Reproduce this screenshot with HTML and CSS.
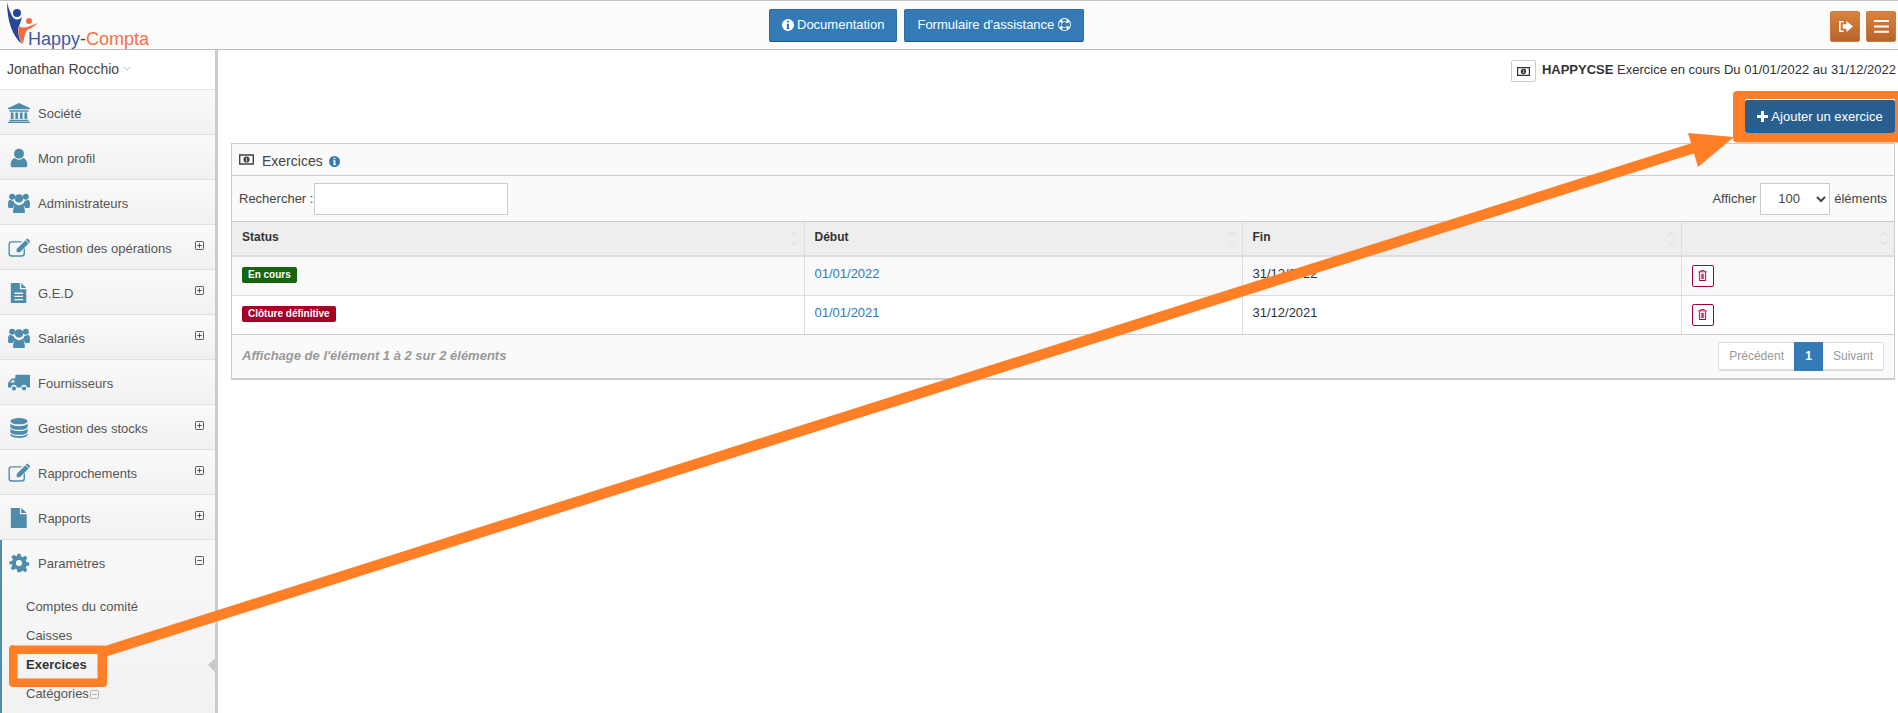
FILE: index.html
```html
<!DOCTYPE html>
<html lang="fr">
<head>
<meta charset="utf-8">
<title>Happy-Compta - Exercices</title>
<link rel="stylesheet" href="styles.css">
</head>
<body>
<svg class="defs" width="0" height="0" aria-hidden="true">
  <symbol id="i-bank" viewBox="0 0 24 22"><path d="M12 0 24 5.500V7H0V5.500ZM1.500 8h21v1.500h-21zM3 10.500h3v7H3zM8 10.500h3v7H8zM13 10.500h3v7h-3zM18 10.500h3v7h-3zM1.500 18.500h21V20h-21zM0 20.500h24V22H0z"/></symbol>
  <symbol id="i-user" viewBox="0 0 24 24"><circle cx="12" cy="7" r="6"/><path d="M4 23c-1.500 0-2-1-2-2.500C2 16 4 12.500 7 12c1.300 1.300 3 2.200 5 2.200s3.700-.9 5-2.200c3 .5 5 4 5 8.500 0 1.500-.5 2.500-2 2.500z"/></symbol>
  <symbol id="i-users" viewBox="0 0 24 22"><circle cx="4.500" cy="4" r="3.300"/><circle cx="19.500" cy="4" r="3.300"/><circle cx="12" cy="6" r="4.500"/><path d="M0 15V11c0-2 1-3.500 2.500-3.500 1 .8 2 1.200 3.500 1.200.5 2 1.500 3 3 3.800C7 13.500 5.500 15 5.300 16.500 2 16.500 0 16.500 0 15zM24 15v-4c0-2-1-3.500-2.500-3.500-1 .8-2 1.200-3.500 1.200-.5 2-1.500 3-3 3.800 2 1 3.500 2.500 3.700 4 3.300 0 5.300 0 5.300-1.500zM6.500 22c-.8 0-1-.8-1-1.500 0-4 1.500-7.500 3.500-8 1 .8 2 1.300 3 1.300s2-.5 3-1.300c2 .5 3.500 4 3.500 8 0 .7-.2 1.500-1 1.500z"/></symbol>
  <symbol id="i-edit" viewBox="0 0 24 20"><path d="M4 2.500h11.500l-1.500 1.500H4A2 2 0 0 0 2 6v10a2 2 0 0 0 2 2h11a2 2 0 0 0 2-2v-4.500l1.500-1.500v6a3.500 3.500 0 0 1-3.500 3.500H4A3.500 3.500 0 0 1 .5 16V6A3.500 3.500 0 0 1 4 2.500z"/><path d="M19 1.500 22.500 5 13 14.500H9.500V11zM20 .5c.8-.7 1.600-.7 2.300 0l1.200 1.200c.7.700.7 1.500 0 2.300l-.5.500L19.500 1z"/></symbol>
  <symbol id="i-file-text" viewBox="0 0 18 22"><path d="M1 0h9v7h7v14a1 1 0 0 1-1 1H1a1 1 0 0 1-1-1V1a1 1 0 0 1 1-1zM11.500 0 17 5.500h-5.500zM4 10.500v1.500h9.500v-1.500zM4 14v1.500h9.500V14zM4 17.500V19h9.500v-1.500z" fill-rule="evenodd"/></symbol>
  <symbol id="i-file" viewBox="0 0 18 22"><path d="M1 0h9v7h7.500v14a1 1 0 0 1-1 1H1a1 1 0 0 1-1-1V1a1 1 0 0 1 1-1zM11.500 0 17.500 5.500h-6z"/></symbol>
  <symbol id="i-truck" viewBox="0 0 24 18"><path d="M9 0h14a1 1 0 0 1 1 1v12a1 1 0 0 1-1 1h-2.500a3 3 0 0 0-6 0H9.500a3 3 0 0 0-6 0H1a1 1 0 0 1-1-1V9l4-5h4V1a1 1 0 0 1 1-1zM2.500 8.500H7V6H4.500z" fill-rule="evenodd"/><circle cx="6.500" cy="15" r="2.300"/><circle cx="17.500" cy="15" r="2.300"/></symbol>
  <symbol id="i-db" viewBox="0 0 20 22"><ellipse cx="10" cy="3.500" rx="9.500" ry="3.500"/><path d="M.5 6c1.500 2 5 2.800 9.500 2.800S18 8 19.500 6v3.500c0 2-4 3.500-9.500 3.500S.5 11.500.5 9.500zM.5 11.500c1.500 2 5 2.800 9.500 2.800s8-.8 9.500-2.800V15c0 2-4 3.500-9.500 3.500S.5 17 .5 15zM.5 17c1.500 2 5 2.800 9.500 2.800s8-.8 9.500-2.800v1.500c0 2-4 3.500-9.500 3.500S.5 20.500.5 18.500z"/></symbol>
  <symbol id="i-cog" viewBox="-1 -1 26 26"><path fill-rule="evenodd" d="M10 0h4l.7 3.500 2.300 1 3-2 2.800 2.800-2 3 1 2.300 3.500.7v4l-3.500.7-1 2.300 2 3-2.800 2.800-3-2-2.300 1L14 24h-4l-.7-3.500-2.300-1-3 2-2.800-2.800 2-3-1-2.300L-.5 14v-4l3.500-.7 1-2.300-2-3L5.300 1.200l3 2 1-.2zM12 8a4 4 0 1 0 0 8 4 4 0 0 0 0-8z"/></symbol>
  <symbol id="i-plus-sq" viewBox="0 0 10 10"><path fill="none" stroke="currentColor" d="M1.500.5h7a1 1 0 0 1 1 1v7a1 1 0 0 1-1 1h-7a1 1 0 0 1-1-1v-7a1 1 0 0 1 1-1zM2.500 5h5M5 2.500v5"/></symbol>
  <symbol id="i-minus-sq" viewBox="0 0 10 10"><path fill="none" stroke="currentColor" d="M1.500.5h7a1 1 0 0 1 1 1v7a1 1 0 0 1-1 1h-7a1 1 0 0 1-1-1v-7a1 1 0 0 1 1-1zM2.500 5h5"/></symbol>
  <symbol id="i-money" viewBox="0 0 16 11"><path fill-rule="evenodd" d="M0 0h16v11H0zM1.500 1.500v8h13v-8zM8 2.200a3.300 3.300 0 1 1 0 6.600 3.300 3.300 0 0 1 0-6.600zM7.300 3.800v.7h.4v2.200h-.5v.6h1.700v-.6h-.5V3.800z"/></symbol>
  <symbol id="i-info" viewBox="0 0 12 12"><path fill-rule="evenodd" d="M6 0a6 6 0 1 1 0 12A6 6 0 0 1 6 0zM5 1.800v1.800h2V1.800zM4.500 4.700v1.100H5v3H4.500v1.100h3V8.800H7V4.700z"/></symbol>
  <symbol id="i-ring" viewBox="0 0 14 14"><path fill-rule="evenodd" d="M7 0a7 7 0 1 1 0 14A7 7 0 0 1 7 0zM7 4.200a2.800 2.800 0 1 0 0 5.600 2.800 2.800 0 0 0 0-5.600zM4.300 1.700l1 2.300a3.500 3.500 0 0 1 3.400 0l1-2.300a6 6 0 0 0-5.400 0zM4.300 12.300l1-2.300a3.500 3.500 0 0 0 3.400 0l1 2.300a6 6 0 0 1-5.400 0zM1.700 4.300l2.300 1a3.500 3.500 0 0 0 0 3.400l-2.300 1a6 6 0 0 1 0-5.400zM12.300 4.300l-2.300 1a3.500 3.500 0 0 0 0 3.400l2.300 1a6 6 0 0 0 0-5.400z"/></symbol>
  <symbol id="i-out" viewBox="0 0 16 14"><path d="M1 1h5v1.800H2.800v8.400H6V13H1z"/><path d="M5 4.500h4V1l7 6-7 6V9.500H5z"/></symbol>
  <symbol id="i-bars" viewBox="0 0 16 14"><path d="M0 0h16v2.200H0zM0 5.800h16V8H0zM0 11.600h16v2.200H0z"/></symbol>
  <symbol id="i-plus" viewBox="0 0 11 11"><path d="M4 0h3v4h4v3H7v4H4V7H0V4h4z"/></symbol>
  <symbol id="i-trash" viewBox="0 0 10 12"><path d="M3.200 0h3.600l.8 1.500H10v1H9v8.500a1 1 0 0 1-1 1H2a1 1 0 0 1-1-1V2.500H0v-1h2.400zM2 2.500V11h6V2.500zM3.500 1.500h3L6.200.8H3.800zM3.200 4h.8v6h-.8zM4.600 4h.8v6h-.8zM6 4h.8v6H6z" fill-rule="evenodd"/></symbol>
  <symbol id="i-sort" viewBox="0 0 12 20"><path fill="none" stroke="currentColor" d="M1 7l5-5 5 5M1 13l5 5 5-5"/></symbol>
</svg>

<header class="topbar">
  <a class="logo">
    <svg class="logo-mark" viewBox="7 1 34 46" aria-hidden="true">
      <path fill="#24479a" d="M7 2C7 20 12 36 22 44 18 36 17 30 19 26 20 24 21 21 22 17 18 21 14 20 12 16 10 12 8 7 7 2z"/>
      <circle cx="17" cy="13" r="4" fill="#24479a"/>
      <path fill="#f4693f" d="M23 44C19 38 17 32 19 26 22 28 26 28 30 26L38 23C33 27 30 29 27 30 25 33 24 38 23 44z"/>
      <circle cx="29" cy="21" r="3" fill="#f4693f"/>
    </svg>
    <span class="logo-text"><span class="logo-a">Happy</span><span class="logo-d">-</span><span class="logo-b">Compta</span></span>
  </a>
  <div class="top-actions">
    <a class="btn btn-blue btn-doc"><svg class="ic12"><use href="#i-info"/></svg> Documentation</a>
    <a class="btn btn-blue">Formulaire d'assistance <svg class="ic14"><use href="#i-ring"/></svg></a>
  </div>
  <div class="top-right">
    <a class="btn-orange"><svg class="ic-o"><use href="#i-out"/></svg></a>
    <a class="btn-orange"><svg class="ic-o"><use href="#i-bars"/></svg></a>
  </div>
</header>

<div class="layout">
  <aside class="sidebar">
    <div class="user">Jonathan Rocchio<svg class="chev" viewBox="0 0 8 5"><path fill="none" stroke="currentColor" d="M.5.500 4 4 7.500.5"/></svg></div>
    <nav>
      <a class="item"><svg class="ico"><use href="#i-bank"/></svg><span>Société</span></a>
      <a class="item"><svg class="ico"><use href="#i-user"/></svg><span>Mon profil</span></a>
      <a class="item"><svg class="ico"><use href="#i-users"/></svg><span>Administrateurs</span></a>
      <a class="item"><svg class="ico"><use href="#i-edit"/></svg><span>Gestion des opérations</span><svg class="tog"><use href="#i-plus-sq"/></svg></a>
      <a class="item"><svg class="ico"><use href="#i-file-text"/></svg><span>G.E.D</span><svg class="tog"><use href="#i-plus-sq"/></svg></a>
      <a class="item"><svg class="ico"><use href="#i-users"/></svg><span>Salariés</span><svg class="tog"><use href="#i-plus-sq"/></svg></a>
      <a class="item"><svg class="ico"><use href="#i-truck"/></svg><span>Fournisseurs</span></a>
      <a class="item"><svg class="ico"><use href="#i-db"/></svg><span>Gestion des stocks</span><svg class="tog"><use href="#i-plus-sq"/></svg></a>
      <a class="item"><svg class="ico"><use href="#i-edit"/></svg><span>Rapprochements</span><svg class="tog"><use href="#i-plus-sq"/></svg></a>
      <a class="item"><svg class="ico"><use href="#i-file"/></svg><span>Rapports</span><svg class="tog"><use href="#i-plus-sq"/></svg></a>
      <div class="open">
        <a class="item item-open"><svg class="ico"><use href="#i-cog"/></svg><span>Paramètres</span><svg class="tog"><use href="#i-minus-sq"/></svg></a>
        <ul class="sub">
          <li>Comptes du comité</li>
          <li>Caisses</li>
          <li class="current">Exercices</li>
          <li>Catégories<svg class="tog-light"><use href="#i-minus-sq"/></svg></li>
        </ul>
      </div>
    </nav>
    <i class="caret"></i>
  </aside>

  <main class="main">
    <div class="context">
      <span class="ctx-box"><svg class="ic-m"><use href="#i-money"/></svg></span>
      <span><b>HAPPYCSE</b> Exercice en cours Du 01/01/2022 au 31/12/2022</span>
    </div>
    <div class="add-row"><a class="btn-add"><svg class="ic-p"><use href="#i-plus"/></svg> Ajouter un exercice</a></div>

    <section class="panel">
      <div class="panel-head"><svg class="ic-mh"><use href="#i-money"/></svg><span>Exercices</span><svg class="ic-i"><use href="#i-info"/></svg></div>
      <div class="filters">
        <label class="search">Rechercher :<input type="text"></label>
        <label class="length">Afficher <select><option>100</option></select> éléments</label>
      </div>
      <table>
        <colgroup><col class="c1"><col class="c2"><col class="c3"><col></colgroup>
        <thead>
          <tr>
            <th>Status<svg class="sort"><use href="#i-sort"/></svg></th>
            <th>Début<svg class="sort"><use href="#i-sort"/></svg></th>
            <th>Fin<svg class="sort"><use href="#i-sort"/></svg></th>
            <th><svg class="sort"><use href="#i-sort"/></svg></th>
          </tr>
        </thead>
        <tbody>
          <tr class="odd">
            <td><span class="badge green">En cours</span></td>
            <td><a class="link">01/01/2022</a></td>
            <td>31/12/2022</td>
            <td><a class="del"><svg class="ic-t"><use href="#i-trash"/></svg></a></td>
          </tr>
          <tr>
            <td><span class="badge red">Clôture définitive</span></td>
            <td><a class="link">01/01/2021</a></td>
            <td>31/12/2021</td>
            <td><a class="del"><svg class="ic-t"><use href="#i-trash"/></svg></a></td>
          </tr>
        </tbody>
      </table>
      <div class="panel-foot">
        <em>Affichage de l'élément 1 à 2 sur 2 éléments</em>
        <div class="pager"><a>Précédent</a><a class="on">1</a><a>Suivant</a></div>
      </div>
    </section>
  </main>
</div>

<svg class="annot" viewBox="0 0 1898 713" aria-hidden="true">
  <path fill="#ff7f27" fill-rule="evenodd" d="M1737 91h170v51.500h-170a4 4 0 0 1-4-4V95a4 4 0 0 1 4-4zM1745 99v34h150V99z"/>
  <path fill="#ff7f27" fill-rule="evenodd" d="M13 645.500h90a4 4 0 0 1 4 4V683a4 4 0 0 1-4 4H13a4 4 0 0 1-4-4v-33.500a4 4 0 0 1 4-4.500zM17.500 654v24.500h80V654z"/>
  <path stroke="#ff7f27" stroke-width="10.500" d="M100 653 1700 146"/>
  <path fill="#ff7f27" d="M1734 137 1688 133 1698 167z"/>
</svg>
</body>
</html>
```
FILE: styles.css
```css
* { box-sizing: border-box; }
html, body { margin: 0; height: 713px; overflow: hidden; }
body {
  position: relative;
  display: flex;
  flex-direction: column;
  background: #fff;
  color: #333;
  font: 13px/18px "Liberation Sans", Arial, sans-serif;
}
.defs { position: absolute; }
a { color: inherit; text-decoration: none; }
svg { fill: currentColor; }

/* top bar */
.topbar {
  flex: 0 0 50px;
  display: flex;
  align-items: flex-start;
  background: #fbfbf9;
  border-top: 1px solid #c4c4c4;
  border-bottom: 1px solid #bdbdbd;
}
.logo { position: relative; flex: 0 0 769px; height: 48px; display: block; }
.logo-mark { position: absolute; left: 7px; top: 0; width: 34px; height: 46px; }
.logo-text { position: absolute; left: 28px; top: 27px; font-size: 18px; line-height: 22px; white-space: nowrap; }
.logo-a { color: #3f5aa3; }
.logo-d { color: #444; }
.logo-b { color: #f4704a; }
.top-actions { display: flex; gap: 7px; margin-top: 8px; }
.btn {
  height: 33px;
  padding: 0 12px 2px;
  display: flex;
  align-items: center;
  gap: 4px;
  background: #337ab7;
  border: 1px solid #2e6da4;
  border-bottom-color: #245580;
  border-radius: 2px;
  color: #fff;
  white-space: nowrap;
}
.btn-doc { gap: 3px; }
.ic12 { width: 12px; height: 12px; }
.ic14 { width: 13px; height: 13px; }
.top-right { margin-left: auto; margin-top: 10px; display: flex; gap: 6px; padding-right: 2px; }
.btn-orange {
  width: 30px;
  height: 31px;
  display: flex;
  align-items: center;
  justify-content: center;
  color: #fff;
  background: linear-gradient(#d9823e, #b8632b);
  border: 1px solid #cf7a3c;
  border-radius: 2px;
}
.ic-o { width: 15px; height: 13px; }

/* layout */
.layout { flex: 1; display: flex; min-height: 0; }
.sidebar {
  position: relative;
  flex: 0 0 218px;
  border-right: 3px solid #ccc;
  overflow: hidden;
  color: #555;
}
.user {
  height: 40px;
  padding: 0 7px 2px;
  display: flex;
  align-items: center;
  font-size: 14px;
  color: #444;
  border-bottom: 1px solid #e2e2e2;
}
.chev { width: 8px; height: 5px; margin-left: 4px; color: #bbb; }
.item {
  position: relative;
  height: 45px;
  padding-top: 3px;
  display: flex;
  align-items: center;
  background: linear-gradient(#fafafa, #f1f1f1);
  border-bottom: 1px solid #e0e0e0;
}
.item span { flex: 1; }
.ico { flex: 0 0 22px; height: 20px; margin: 0 8px 1px; color: #4e8cab; }
.tog { width: 9px; height: 9px; margin-right: 11px; margin-bottom: 6px; color: #444; }
.open {
  background: linear-gradient(#f8f8f8, #f1f1f1);
  border-left: 2px solid #4e8cab;
  min-height: 200px;
}
.item-open { background: none; border-bottom: 0; margin-left: -2px; padding-top: 2px; }
.sub { list-style: none; margin: 0; padding: 7px 0 0 24px; }
.sub li { height: 29px; line-height: 29px; color: #555; }
.sub .current { font-weight: bold; color: #333; }
.tog-light { width: 9px; height: 9px; margin-left: 1px; color: #aaa; vertical-align: -1px; }
.caret {
  position: absolute;
  right: 0;
  top: 608px;
  border: 7px solid transparent;
  border-left-width: 0;
  border-right-color: #c9c9c9;
}

/* main */
.main { flex: 1; min-width: 0; padding: 0 3px 0 13px; }
.context {
  height: 40px;
  padding-top: 10px;
  display: flex;
  justify-content: flex-end;
  gap: 6px;
  align-items: flex-start;
  line-height: 19px;
  margin-right: -1px;
}
.ctx-box {
  width: 25px;
  height: 22px;
  display: flex;
  align-items: center;
  justify-content: center;
  border: 1px solid #ccc;
  border-radius: 2px;
  background: #fff;
}
.ic-m { width: 13px; height: 9px; }
.add-row { height: 53px; padding-top: 10px; display: flex; justify-content: flex-end; }
.btn-add {
  width: 150px;
  height: 33px;
  display: flex;
  align-items: center;
  justify-content: center;
  gap: 3px;
  background: #295f8e;
  color: #fff;
  border-radius: 2px;
}
.ic-p { width: 11px; height: 11px; }

/* panel */
.panel {
  background: #fafafa;
  border: 1px solid #ccc;
  border-bottom-width: 2px;
}
.panel-head {
  height: 32px;
  padding: 3px 7px 0;
  display: flex;
  align-items: center;
  font-size: 14px;
  color: #444;
  border-bottom: 1px solid #ccc;
}
.ic-mh { width: 15px; height: 11px; margin-right: 8px; margin-bottom: 3px; }
.ic-i { width: 11px; height: 11px; margin-left: 6px; color: #337ab7; }
.filters {
  height: 45px;
  padding: 6px 7px;
  display: flex;
  justify-content: space-between;
  align-items: center;
  color: #444;
}
.search { display: flex; align-items: center; }
.search input {
  width: 194px;
  height: 32px;
  margin: 0 0 0 1px;
  border: 1px solid #ccc;
  background: #fff;
}
.length { display: flex; align-items: center; gap: 4px; }
.length select {
  width: 70px;
  height: 32px;
  padding: 0 0 0 13px;
  border: 1px solid #ccc;
  background: #fff;
  font: 13px "Liberation Sans", Arial, sans-serif;
  color: #444;
}
table { width: 100%; border-collapse: collapse; table-layout: fixed; }
.c1 { width: 572px; }
.c2 { width: 438px; }
.c3 { width: 439px; }
th {
  position: relative;
  height: 34px;
  padding: 0 10px 2px;
  text-align: left;
  font-size: 12px;
  background: #eee;
  border-top: 1px solid #ccc;
  border-bottom: 2px solid #ddd;
  border-left: 1px solid #ddd;
  color: #333;
}
th:first-child, td:first-child { border-left: 0; }
.sort { position: absolute; right: 5px; top: 9px; width: 10px; height: 15px; color: #d4d4d4; }
td {
  height: 39px;
  padding: 8px 10px;
  vertical-align: top;
  background: #fff;
  border-left: 1px solid #ddd;
  border-bottom: 1px solid #ccc;
}
.odd td { background: #f9f9f9; border-bottom-color: #ddd; }
.link { color: #337ab7; }
.badge {
  display: inline-block;
  height: 16px;
  margin-top: 2px;
  padding: 0 6px;
  font-size: 10px;
  line-height: 15px;
  font-weight: bold;
  color: #fff;
  border-radius: 2px;
  vertical-align: top;
}
.green { background: #17650f; }
.red { background: #a60029; }
.del {
  width: 22px;
  height: 22px;
  display: flex;
  align-items: center;
  justify-content: center;
  border: 1px solid #a60030;
  border-radius: 2px;
  background: #fff;
  color: #a60030;
}
.ic-t { width: 9px; height: 11px; }
.panel-foot {
  height: 43px;
  padding: 7px 10px 0 10px;
  display: flex;
  justify-content: space-between;
  align-items: flex-start;
}
.panel-foot em { font-weight: bold; color: #999; line-height: 28px; }
.pager {
  display: flex;
  height: 29px;
  border: 1px solid #ddd;
  border-bottom-width: 2px;
  border-radius: 2px;
  background: #fff;
  color: #999;
  font-size: 12px;
  line-height: 26px;
}
.pager a { padding: 0 10px; }
.pager .on {
  width: 29px;
  padding: 0;
  text-align: center;
  background: #337ab7;
  color: #fff;
  margin: -1px 0 -2px;
  line-height: 28px;
  font-weight: bold;
}

/* annotation overlay */
.annot { position: absolute; left: 0; top: 0; width: 1898px; height: 713px; pointer-events: none; }
```
